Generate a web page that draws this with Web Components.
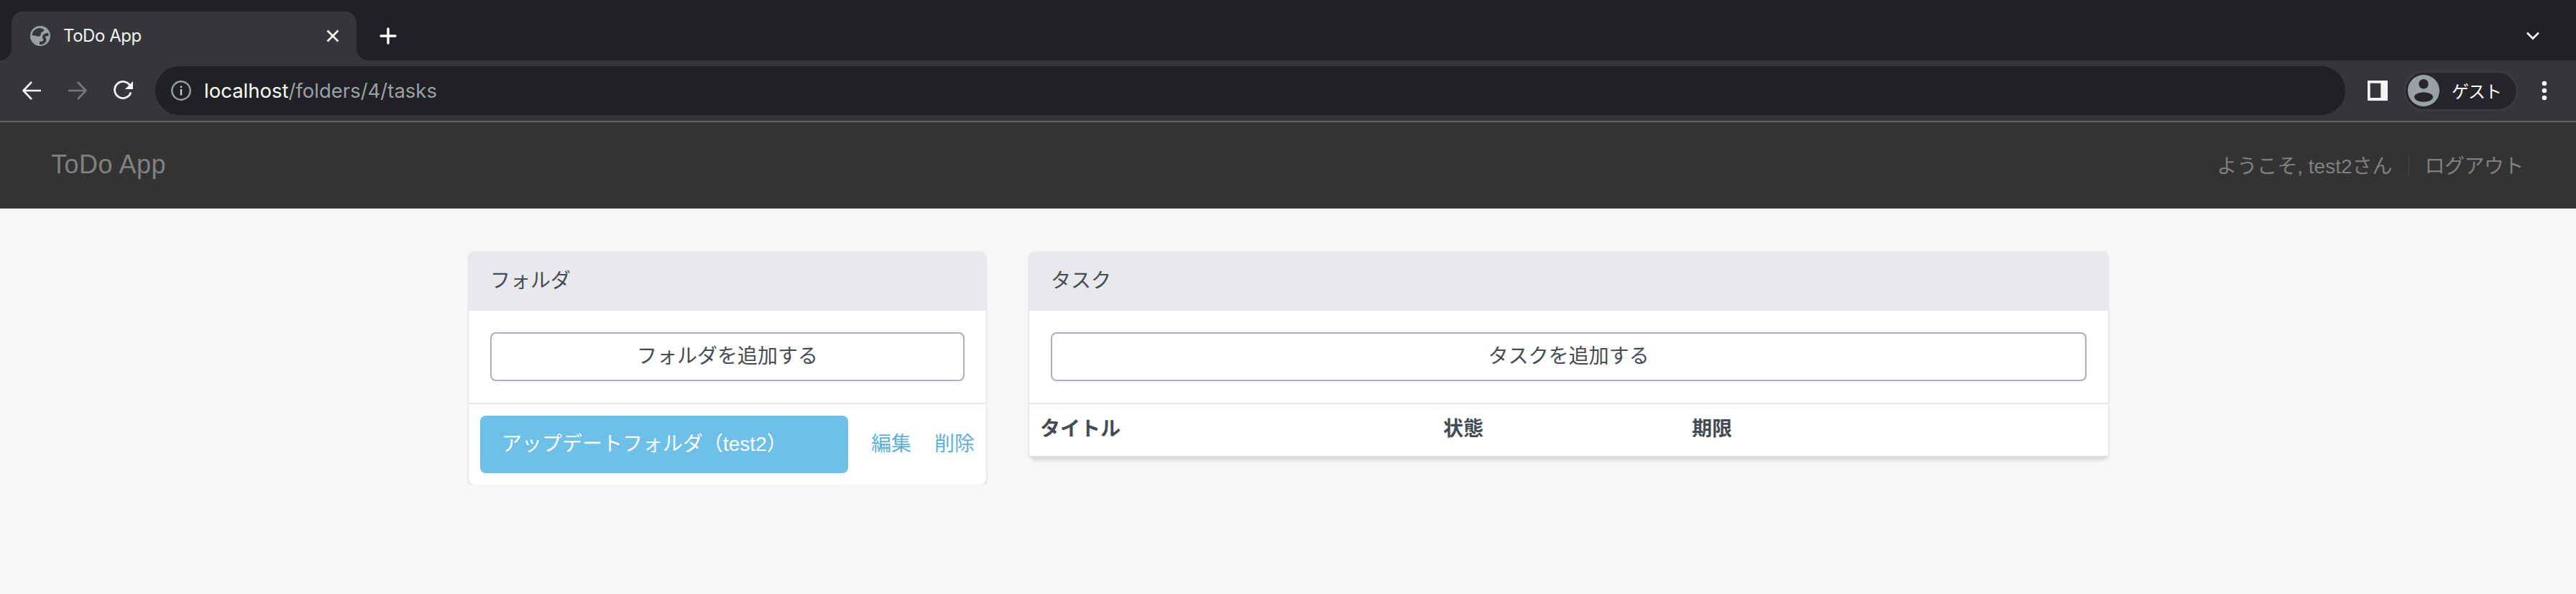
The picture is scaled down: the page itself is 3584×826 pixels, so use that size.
<!DOCTYPE html>
<html lang="ja">
<head>
<meta charset="utf-8">
<title>ToDo App</title>
<style>
  html, body { margin: 0; padding: 0; }
  body {
    background: #f6f7f9;
    font-family: "Liberation Sans", "Noto Sans CJK JP", sans-serif;
  }
</style>
</head>
<body>
<browser-chrome title-text="ToDo App" host="localhost" path="/folders/4/tasks"></browser-chrome>
<app-navbar brand="ToDo App">
  <span slot="user">ようこそ, test2さん</span>
  <a slot="action" style="letter-spacing:-0.5px">ログアウト</a>
</app-navbar>
<app-main>
  <app-panel slot="side" heading="フォルダ">
    <app-button slot="action">フォルダを追加する</app-button>
    <folder-row name="アップデートフォルダ（test2）"></folder-row>
  </app-panel>
  <app-panel slot="content" heading="タスク">
    <app-button slot="action">タスクを追加する</app-button>
    <task-table></task-table>
  </app-panel>
</app-main>

<script>
class BrowserChrome extends HTMLElement {
    connectedCallback() {
        this.attachShadow({ mode: 'open' });
        this.shadowRoot.innerHTML = `
            <style>
                :host {
                    display: block;
                    font-family: Inter, Roboto, "Noto Sans CJK JP", sans-serif;
                    color: #fff;
                }
                svg { display: block; flex: none; }
                .strip {
                    height: 84px;
                    background: #202124;
                    display: flex;
                    align-items: flex-end;
                    padding-left: 16px;
                    box-sizing: border-box;
                }
                .tab {
                    position: relative;
                    width: 480px;
                    height: 68px;
                    box-sizing: border-box;
                    background: #35363a;
                    border-radius: 16px 16px 0 0;
                    display: flex;
                    align-items: center;
                    padding: 0 24px 0 26px;
                }
                .tab::before, .tab::after {
                    content: '';
                    position: absolute;
                    bottom: 0;
                    width: 16px;
                    height: 16px;
                    background: radial-gradient(circle at var(--cx) 0, #202124 15.5px, #35363a 16px);
                }
                .tab::before { left: -16px; --cx: 0; }
                .tab::after { right: -16px; --cx: 100%; }
                .tab .title {
                    margin-left: 18px;
                    flex: 1;
                    font-size: 24px;
                    letter-spacing: -0.45px;
                    line-height: 32px;
                    color: #f1f3f4;
                }
                .plus { margin-left: 32px; align-self: center; margin-top: 16px; }
                .spacer { flex: 1; }
                .chevron { align-self: center; margin: 16px 50px 0 0; }
                .bar {
                    height: 84px;
                    background: #35363a;
                    display: flex;
                    align-items: center;
                    box-sizing: border-box;
                }
                .nav { display: flex; align-items: center; gap: 36px; margin-left: 30px; }
                .omnibox {
                    margin-left: 30px;
                    width: 3047px;
                    height: 68px;
                    border-radius: 34px;
                    background: #202124;
                    display: flex;
                    align-items: center;
                    padding-left: 22px;
                    box-sizing: border-box;
                    font-size: 27.5px;
                }
                .url { margin-left: 18px; color: #9aa0a6; }
                .url b { font-weight: 400; color: #fff; }
                .panel-icon { margin-left: 31px; }
                .profile {
                    margin-left: 23px;
                    width: 158px;
                    height: 55px;
                    box-sizing: border-box;
                    border: 2px solid #3e3f44;
                    border-radius: 28px;
                    background: #26262a;
                    display: flex;
                    align-items: center;
                    padding-left: 3px;
                    font-size: 24px;
                    font-family: "Noto Sans CJK JP", sans-serif;
                }
                .profile span { margin-left: 17px; padding-bottom: 2px; letter-spacing: -1px; }
                .dots { margin-left: 33px; }
                .line { height: 2px; background: #5f6063; }
            </style>
            <div class="strip">
                <div class="tab">
                    <svg width="28" height="28" viewBox="0 0 28 28">
                        <circle cx="14" cy="14" r="14" fill="#9aa0a6"/>
                        <path fill="#35363a" d="M2.500 13C3 8 7 3.500 13 3c2.500 0 5 1 6.500 2.500C19 8 17 8.500 15.500 9c-.5 2-.5 4-2.500 5.500-3 1-5-1.500-7-1z"/>
                        <path fill="none" stroke="#35363a" stroke-width="4" d="M25.500 12c-3 0-6 1-6.500 3-.5 2 1.500 2.500 1.500 4.500 0 2.500-3 4.500-7.500 4.500"/>
                    </svg>
                    <span class="title">${this.getAttribute('title-text')}</span>
                    <svg width="18" height="18" viewBox="0 0 18 18" fill="none" stroke="#fff" stroke-width="2.6">
                        <path d="M1.500 1.500l15 15M16.500 1.500l-15 15"/>
                    </svg>
                </div>
                <svg class="plus" width="24" height="24" viewBox="0 0 24 24" fill="none" stroke="#fff" stroke-width="3.4" stroke-linecap="round">
                    <path d="M12 2v20M2 12h20"/>
                </svg>
                <div class="spacer"></div>
                <svg class="chevron" width="20" height="13" viewBox="0 0 20 13" fill="none" stroke="#f1f3f4" stroke-width="2.7">
                    <path d="M2 1.500l8 8 8-8"/>
                </svg>
            </div>
            <div class="bar">
                <div class="nav">
                    <svg width="28" height="28" viewBox="0 0 28 28" fill="none" stroke="#f1f3f4" stroke-width="2.6" stroke-linejoin="round">
                        <path d="M27 14H3M14 2L2.500 14 14 26"/>
                    </svg>
                    <svg width="28" height="28" viewBox="0 0 28 28" fill="none" stroke="#77787b" stroke-width="2.6" stroke-linejoin="round">
                        <path d="M1 14h24M14 2l11.500 12L14 26"/>
                    </svg>
                    <svg width="28" height="28" viewBox="0 0 28 28" fill="none">
                        <path stroke="#f1f3f4" stroke-width="2.8" d="M24 16.500A11.500 11.500 0 1 1 23 7.200"/>
                        <path fill="#f1f3f4" d="M27 1v11H16z"/>
                    </svg>
                </div>
                <div class="omnibox">
                    <svg width="28" height="28" viewBox="0 0 28 28" fill="none">
                        <circle cx="14" cy="14" r="12.700" stroke="#9aa0a6" stroke-width="2.400"/>
                        <path fill="#c8cbcf" d="M12.800 12h2.400v8.500h-2.400zM12.800 7.500h2.400v2.600h-2.400z"/>
                    </svg>
                    <span class="url"><b>${this.getAttribute('host')}</b>${this.getAttribute('path')}</span>
                </div>
                <svg class="panel-icon" width="28" height="28" viewBox="0 0 28 28">
                    <path fill="#f1f3f4" fill-rule="evenodd" d="M0 0h28v28H0zM3.700 3.700V24h14.600V3.700z"/>
                </svg>
                <div class="profile">
                    <svg width="44" height="44" viewBox="0 0 44 44">
                        <circle cx="22" cy="22" r="22" fill="#9aa0a6"/>
                        <circle cx="22" cy="12.700" r="6.700" fill="#26262a"/>
                        <ellipse cx="22" cy="31" rx="13" ry="6.700" fill="#26262a"/>
                    </svg>
                    <span>ゲスト</span>
                </div>
                <svg class="dots" width="8" height="28" viewBox="0 0 8 28" fill="#f1f3f4">
                    <circle cx="4" cy="4" r="3.300"/><circle cx="4" cy="14" r="3.300"/><circle cx="4" cy="24" r="3.300"/>
                </svg>
            </div>
            <div class="line"></div>
        `;
    }
}

class AppNavbar extends HTMLElement {
    connectedCallback() {
        this.attachShadow({ mode: 'open' });
        this.shadowRoot.innerHTML = `
            <style>
                :host {
                    display: flex;
                    align-items: center;
                    height: 120px;
                    box-sizing: border-box;
                    padding-bottom: 3px;
                    background: #333;
                    color: #808080;
                    font-family: "Liberation Sans", "Noto Sans CJK JP", sans-serif;
                    font-size: 28px;
                }
                .brand { font-size: 36px; letter-spacing: 0.5px; margin-left: 71px; flex: 1; }
                .sep { width: 1px; height: 28px; background: #4a4a4a; margin: 0 21px 0 23px; }
                .right { display: flex; align-items: center; margin-right: 73px; }
            </style>
            <span class="brand">${this.getAttribute('brand')}</span>
            <div class="right">
                <slot name="user"></slot>
                <div class="sep"></div>
                <slot name="action"></slot>
            </div>
        `;
    }
}

class AppMain extends HTMLElement {
    connectedCallback() {
        this.attachShadow({ mode: 'open' });
        this.shadowRoot.innerHTML = `
            <style>
                :host {
                    display: grid;
                    grid-template-columns: 720px 1501px;
                    column-gap: 60px;
                    align-items: start;
                    padding: 60px 0 0 652px;
                }
            </style>
            <slot name="side"></slot>
            <slot name="content"></slot>
        `;
    }
}

class AppPanel extends HTMLElement {
    connectedCallback() {
        this.attachShadow({ mode: 'open' });
        this.shadowRoot.innerHTML = `
            <style>
                :host {
                    display: block;
                    background: #fff;
                    border-radius: 8px;
                    overflow: hidden;
                    box-shadow: 0 2px 4px rgba(0, 0, 0, 0.12), 0 0 2px rgba(0, 0, 0, 0.05);
                    color: #454b52;
                    font-family: "Liberation Sans", "Noto Sans CJK JP", sans-serif;
                    font-size: 28px;
                }
                .heading {
                    height: 82px;
                    box-sizing: border-box;
                    display: flex;
                    align-items: center;
                    padding: 0 30px 6px;
                    background: #e8e9ec;
                }
                .action {
                    padding: 30px;
                    border-bottom: 2px solid #e4e5e8;
                }
            </style>
            <div class="heading">${this.getAttribute('heading')}</div>
            <div class="action"><slot name="action"></slot></div>
            <slot></slot>
        `;
    }
}

class AppButton extends HTMLElement {
    connectedCallback() {
        this.attachShadow({ mode: 'open' });
        this.shadowRoot.innerHTML = `
            <style>
                :host {
                    display: flex;
                    align-items: center;
                    justify-content: center;
                    height: 68px;
                    box-sizing: border-box;
                    padding-bottom: 6px;
                    border: 2px solid #a9b0bb;
                    border-radius: 8px;
                    background: #fff;
                    color: #454b52;
                }
            </style>
            <slot></slot>
        `;
    }
}

class FolderRow extends HTMLElement {
    connectedCallback() {
        this.attachShadow({ mode: 'open' });
        this.shadowRoot.innerHTML = `
            <style>
                :host {
                    display: flex;
                    align-items: center;
                    padding: 16px;
                    color: #5fb0dc;
                }
                .name {
                    width: 512px;
                    height: 80px;
                    box-sizing: border-box;
                    display: flex;
                    align-items: center;
                    padding: 0 0 6px 30px;
                    background: #6ec0e8;
                    border-radius: 8px;
                    color: #fff;
                }
                a { display: block; margin-left: 32px; margin-bottom: 6px; }
            </style>
            <div class="name">${this.getAttribute('name')}</div>
            <a>編集</a>
            <a>削除</a>
        `;
    }
}

class TaskTable extends HTMLElement {
    connectedCallback() {
        this.attachShadow({ mode: 'open' });
        this.shadowRoot.innerHTML = `
            <style>
                :host {
                    display: grid;
                    grid-template-columns: 561px 346px 1fr;
                    align-items: center;
                    height: 76px;
                    box-sizing: border-box;
                    padding: 0 0 8px 15px;
                    border-bottom: 4px solid #dddddd;
                    font-weight: 700;
                }
            </style>
            <span>タイトル</span>
            <span>状態</span>
            <span>期限</span>
        `;
    }
}

customElements.define('browser-chrome', BrowserChrome);
customElements.define('app-navbar', AppNavbar);
customElements.define('app-main', AppMain);
customElements.define('app-panel', AppPanel);
customElements.define('app-button', AppButton);
customElements.define('folder-row', FolderRow);
customElements.define('task-table', TaskTable);
</script>
</body>
</html>
